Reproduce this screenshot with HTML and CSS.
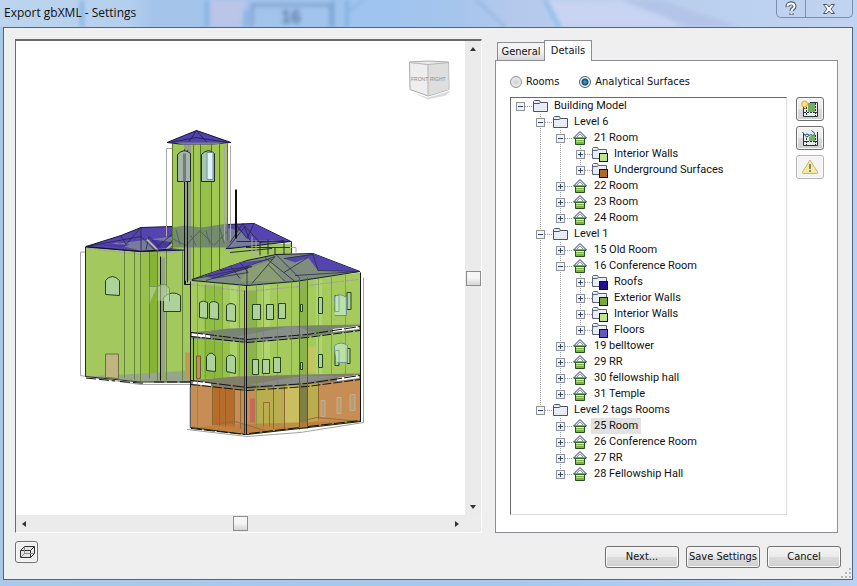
FILE: index.html
```html
<!DOCTYPE html>
<html lang="en">
  <head>
    <meta charset="utf-8">
    <title>Export gbXML - Settings</title>
    <link rel="stylesheet" href="styles.css">
  </head>
  <body>
    <svg class="defs" width="0" height="0" aria-hidden="true">
      <symbol id="folder" viewBox="0 0 16 16">
        <path d="M1.500 13.500V3.500L2.500 2.500H7.500L8.500 4.500H15.500V13.500Z" fill="#e9ecf4" stroke="#4d5261"/>
        <path d="M2 5.500H7L8.500 4.500" fill="none" stroke="#4d5261"/>
      </symbol>
      <symbol id="surface" viewBox="0 0 16 16">
        <path d="M.5 12.500V2.500L1.500 1.500H5.500L6.500 3.500H14.500V12.500Z" fill="#e9ecf4" stroke="#5b6273"/>
        <path d="M1 4.500H5L6.500 3.500" fill="none" stroke="#5b6273"/>
        <rect x="7.500" y="7.500" width="8" height="8" fill="currentColor" stroke="#111"/>
      </symbol>
      <symbol id="house" viewBox="0 0 16 16">
        <path d="M3.500 8H12.500V14.500H3.500Z" fill="#7db54a" stroke="#26511f"/>
        <path d="M4 9.500H12" stroke="#e8f5d5"/>
        <path d="M4 11.500H12" stroke="#b4da85"/>
        <path d="M8 1.500L1.500 8H14.500Z" fill="#dfe6ef" stroke="#2f4057"/>
        <path d="M8 4L4.500 7.500H11.500Z" fill="#fff" stroke="#8895a8"/>
        <path d="M2 8.500H14" stroke="#2c6a22"/>
      </symbol>
    </svg>

    <header class="titlebar">
      <svg class="glass" viewBox="0 0 857 27" preserveAspectRatio="xMinYMin slice" aria-hidden="true">
        <defs>
          <linearGradient id="sky">
            <stop offset="0" stop-color="#bdd5ee"/>
            <stop offset=".15" stop-color="#b4cfed"/>
            <stop offset=".18" stop-color="#a5c4ea"/>
            <stop offset=".45" stop-color="#9fc4ef"/>
            <stop offset=".53" stop-color="#a5c5ec"/>
            <stop offset=".6" stop-color="#b4c9ec"/>
            <stop offset="1" stop-color="#c0d4f1"/>
          </linearGradient>
          <filter id="soft" x="-10%" y="-50%" width="120%" height="200%"><feGaussianBlur stdDeviation="2"/></filter>
        </defs>
        <rect width="857" height="27" fill="url(#sky)"/>
        <g filter="url(#soft)">
          <path d="M82 0V27M207 0V27M246 10V27M333 0V27M347 0V27" stroke="#79abdd" stroke-width="3"/>
          <path d="M210 0H246L240 27H210Z" fill="#bac5e8"/>
          <path d="M252 27V5H331V27" fill="none" stroke="#7f9fcb" stroke-width="3"/>
          <path d="M348 12L364 0M476 0L505 27" stroke="#8fb0dc" stroke-width="2"/>
          <path d="M546 0L562 27H680L640 0Z" fill="#c8d4f1"/>
          <path d="M545 0L560 27" stroke="#7db6ea" stroke-width="3"/>
          <path d="M620 0L690 27H740L660 0Z" fill="#b4c4e8"/>
          <text class="ghost" x="281" y="23">16</text>
        </g>
      </svg>
      <h1>Export gbXML - Settings</h1>
      <div class="caption">
        <button type="button" aria-label="Help">
          <svg width="14" height="16" viewBox="0 0 14 16"><path d="M3.500 6C3 1 11 1 10.500 5.500C10.300 8 7.500 7.500 7.500 10M7.500 12V14" fill="none" stroke="#4b5568" stroke-width="4"/><path d="M3.500 5.500C3.500 1.500 10.500 1.500 10.500 5.500C10.300 8 7.500 7.500 7.500 10M7.500 12V13.500" fill="none" stroke="#fff" stroke-width="2"/></svg>
        </button>
        <button type="button" class="close" aria-label="Close">
          <svg width="14" height="12" viewBox="0 0 14 12"><path d="M1.500 1.500H5L7 4L9 1.500H12.500L9 6L12.500 10.500H9L7 8L5 10.500H1.500L5 6Z" fill="#fff" stroke="#4b5568"/></svg>
        </button>
      </div>
    </header>

    <main class="client">
      <div class="content">
        <section class="viewport" aria-label="Model preview">
          <svg class="stage" viewBox="16 41 449 473" role="img" aria-label="Analytical model">
            <!-- view cube -->
            <g class="cube">
              <path d="M412 92L428 97L451 90L446 95L428 99Z" fill="#dcdcdc"/>
              <path d="M409.500 61.500L428 60.500L448.500 61.500L449 89L428 95.500L410 89Z" fill="#eee" stroke="#aaa"/>
              <path d="M428 64L448.500 62V89L428 95Z" fill="#dedede"/>
              <path d="M409.500 62L428 64L448.500 62M428 64V95" fill="none" stroke="#b4b4b4"/>
              <text x="411" y="80">FRONT</text>
              <text x="430" y="80">RIGHT</text>
            </g>

            <!-- rear wing -->
            <path d="M80.500 375V251.500H172M80 375L140 384H190" fill="none" stroke="#aaa6ae"/>
            <path d="M85.500 246.500L140 252L172 247L291 243V290H190V381H140L85.500 376Z" fill="#a2c85e"/>
            <path d="M140 252L157 250V381H140Z" fill="#98c04c"/>
            <path d="M149 250H157V374H149Z" fill="#84b336"/>
            <path d="M85.500 376L125 374L190 370V381H140Z" fill="#96a58b"/>
            <path d="M88 248L140 254L180 251" fill="none" stroke="#a99fae" stroke-dasharray="4 1"/>
            <path d="M85.500 246V376L140 381.500H190" fill="none" stroke="#253116"/>
            <path d="M124.500 250V377M134.500 251V379M140.500 251V381M149.500 251V378M157.500 250V380M166.500 250V380M182.500 250V380" stroke="#63843a"/>
            <path d="M160.500 256V380M185.500 150V284" stroke="#111"/>
            <rect x="161" y="257" width="4" height="123" fill="#93a67a"/>
            <path d="M86 377.500L115 380.500M120 381L146 383M154 381.500H190" stroke="#111" stroke-dasharray="10 3"/>

            <path d="M86 246L121 235L141 227L172 226L254 223L291 241L230 248L172 250L140 251Z" fill="#5544b0" stroke="#15134a"/>
            <path d="M112 243L141 237L172 236L230 228L284 241L231 247L140 250Z" fill="#767c9a"/>
            <path d="M236 226L254 223L288 240L250 240ZM121 236L141 228L172 227V236L118 243Z" fill="#5544b0"/>
            <path d="M145 238L190 244L154 249ZM96 244L130 244L122 247Z" fill="#4937a5"/>
            <path d="M86 246L141 236L154 249L172 234L190 250L210 230L228 247L245 226L260 242L284 240M121 235L126 244L141 227V250M146 249L149 236L160 247M165 249L172 240L178 249M236 224L247 238L254 223M230 242L243 223L250 240" fill="none" stroke="#27253f" stroke-opacity=".8"/>
            <path d="M147 239L158 250M166 249L180 237M193 249L206 235M213 248L222 236" stroke="#adb5ad" stroke-width="2"/>
            <path d="M86 246.500L140 251L190 247" fill="none" stroke="#111"/>
            <path d="M230 250L291 243V268H230Z" fill="#a2c85e"/>
            <path d="M236.500 241H291.500V253M230 252L272 248M275 247V254M284 241V254M260 241V255M268 239V254M246 247H290" fill="none" stroke="#283022"/>
            <path d="M291 247H296V252M252 236V260M256 240V258" fill="none" stroke="#aaa"/>

            <!-- bell tower -->
            <path d="M172.500 143H227.500V244L212 280H185V249L172.500 248Z" fill="#a1c855"/>
            <path d="M201 145H212V280H201Z" fill="#8fba42" opacity=".6"/>
            <path d="M184 143H191V280H184Z" fill="#92a084"/>
            <path d="M172 227L185 225L201 227L228 223V247H172Z" fill="#6e8075" opacity=".85"/>
            <path d="M172 238L186 245L200 230L214 245L228 230M176 229L180 244M191 235L196 245M206 230L210 244M220 228L224 243" fill="none" stroke="#46584d" stroke-opacity=".7"/>
            <path d="M166.500 148V236M166.500 148H172M230.500 145V240M224.500 145V240" fill="none" stroke="#aaa6ae"/>
            <path d="M172.500 143V248M193.500 143V278M200.500 143V278M211.500 143V278M219.500 143V278M227.500 143V240" stroke="#547428"/>
            <path d="M184.500 149V284H190M187.500 150V282" fill="none" stroke="#111"/>
            <path d="M177.500 181V154Q184 147 190.500 153V181Z" fill="#a5b6a7" stroke="#1e2e27"/>
            <path d="M183 153H186V181H183Z" fill="#6f7b88"/>
            <path d="M201.500 181V154Q208 147 214.500 153V181Z" fill="#a9c7ae" stroke="#1e2e27"/>
            <path d="M207 152H213V179H207Z" fill="#def5f5" stroke="#7387a4"/>
            <path d="M167 142L196.500 130L231 142L212 143.500H180Z" fill="#5243b0" stroke="#16123a"/>
            <path d="M196.500 130L189 141M196.500 130L207 142M170 142L196 137L228 142" fill="none" stroke="#282450"/>
            <path d="M175 142H224L216 144H183Z" fill="#79808a"/>
            <path d="M236 189V238" stroke="#111" stroke-width="2"/>

            <path class="pane" d="M105.500 294V280Q112 272 119.500 280V295Z"/>
            <path class="pane" d="M163.500 311V297Q172 289 180.500 295V311Z"/>
            <path d="M149.500 303V286H157M157.500 300V286Q165 281 169.500 288V301" fill="#bcd7ad" fill-opacity=".6" stroke="#789557"/>
            <path d="M105.500 377V353.500H118.500V378Z" fill="#c0b580" stroke="#6c7043"/>
            <path d="M185 352H190V378H185Z" fill="#bd9b53"/>

            <!-- front wing -->
            <path d="M190.500 281L247 285L361 272V421L247 434L190.500 427Z" fill="#a4cb5c"/>
            <path d="M191 338L247 343V386L191 379Z" fill="#98c148"/>
            <path d="M204 284L223 286V330L204 329ZM204 339L223 342V378L204 377Z" fill="#86b636" opacity=".65"/>
            <path d="M230 285H237V382H230ZM262 284H270V380H262ZM316 279H322V374H316Z" fill="#b4d779" opacity=".7"/>
            <path d="M247 290H256V385H247ZM299 278H307V376H299Z" fill="#719a3a" opacity=".45"/>
            <path d="M191 284L247 291L299 286L358 279" fill="none" stroke="#a89bad" stroke-dasharray="4 1"/>

            <path d="M191 382L247 389L361 376V420L247 433L191 427Z" fill="#c68d55"/>
            <path d="M212 385L235 388V427L212 424Z" fill="#b66c2b"/>
            <path d="M256 388L318 381V420L265 430L256 426Z" fill="#b9ad50"/>
            <path d="M284 385H299V427H284Z" fill="#c9bf60"/>
            <path d="M299 384H307V428H299Z" fill="#7f8043"/>
            <path d="M193 427L228 424L361 420L247 433Z" fill="#bd7b3a" opacity=".7"/>
            <path d="M212.500 384V425M219.500 385V426M225.500 386V426M234.500 387V424M240.500 388V428M318.500 382V419M284.500 386V428M273.500 386V428" stroke="#8d6731"/>
            <path d="M250 398H255V422H250Z" fill="#c46a56"/>
            <path d="M263.500 426V402H269.500V426M212 424L235 421L265 430M299 421L317 417L361 421" fill="none" stroke="#9b6b36"/>
            <path d="M321 400H325V416H321ZM337 397H341V413H337ZM350 394H355V410H350Z" fill="#b89c72" stroke="#c9ad87"/>

            <path d="M191 332L230 328L307 325L360 324V330L300 337L247 342L191 338Z" fill="#788573"/>
            <path d="M191 380L235 376L307 374L360 373V379L247 389L191 384Z" fill="#83806a"/>
            <path d="M232 337L295 325L315 333L267 341ZM250 384L305 375L340 376L280 386Z" fill="#8c9394" opacity=".7"/>
            <path d="M192 334L210 336M333 330L359 327M193 382L211 384M337 379L359 376" stroke="#fff" stroke-width="3"/>
            <path d="M191 332L247 339L307 334L360 326M191 380L247 387L307 383L360 375" fill="none" stroke="#111" stroke-dasharray="12 2"/>
            <path d="M191 336L247 342L307 337L360 330M191 384L247 390L307 386L360 379" fill="none" stroke="#111" stroke-dasharray="9 2"/>

            <path d="M192 279L247 260L276 254L313 253L360 271L295 281L247 285L192 280Z" fill="#7f8c80" stroke="#15202b"/>
            <path d="M284 258L313 253L359 271L318 270L308 257L295 262ZM204 275L240 262L275 258L252 267L235 272L212 278Z" fill="#5544b0"/>
            <path d="M250 264L270 259L285 281H240Z" fill="#8fa46e" opacity=".7"/>
            <path d="M192 279L235 270L275 256L252 283M240 262L248 272L212 278M265 257L295 281M268 264L285 281M276 254L300 278M284 258L313 254L318 270L359 271L295 275M308 257L284 272M247 266V285M220 270L252 266L206 280M230 265L240 278" fill="none" stroke="#24303e" stroke-opacity=".8"/>

            <path d="M197.500 282V427M205.500 284V380M214.500 283V381M222.500 284V381M239.500 284V384M256.500 284V427M263.500 283V385M277.500 282V384M291.500 281V380M318.500 278V376M331.500 276V374M345.500 274V374" stroke="#6c9338" opacity=".65"/>
            <path d="M299.500 278V429M307.500 277V428" stroke="#4e6430"/>
            <path d="M190.500 281V427L247 434L361 421M193.500 337V381" fill="none" stroke="#1a2112"/>
            <path d="M246.500 285V434M360.500 272V421" stroke="#111"/>
            <path d="M244.500 290V433" stroke="#333"/>
            <path d="M363.500 277V422L300 432L247 436L187 429M190 387V427" fill="none" stroke="#a29ea5"/>
            <path d="M191 428L245 434M249 433L300 427M308 426L361 420" stroke="#111" stroke-dasharray="11 2"/>

            <path class="pane" d="M199.500 317V302Q203 299 207.500 302V318ZM209.500 318V303Q213 299 218.500 303V319ZM226.500 320V305Q231 301 235.500 305V321Z"/>
            <path class="pane" d="M252.500 304H260.500V319H252.500ZM266.500 304H273.500V319H266.500ZM278.500 303H285.500V318H278.500Z"/>
            <path class="pane" d="M318.500 297H322.500V313H318.500ZM335 295H339V311H335ZM347 292H351V309H347ZM300.500 304H302.500V311H300.500Z"/>
            <path class="pane" d="M206.500 370V356Q211 349 215.500 356V371ZM226.500 371V357Q231 352 235.500 357V373Z"/>
            <path class="pane" d="M252.500 359H258.500V374H252.500ZM262.500 359H269.500V373H262.500ZM273.500 357H280.500V372H273.500Z"/>
            <path class="pane" d="M318.500 354H322.500V367H318.500ZM335 350H339V365H335ZM347 348H350V363H347ZM300.500 362H302.500V369H300.500Z"/>
            <path d="M334.500 350V345Q341 340 347.500 345V362H337M334.500 301V296Q340 292 346.500 297V315H335" fill="#ccefdc" fill-opacity=".6" stroke="#6d8e9b"/>
            <path d="M308 346H316V372H308Z" fill="#c3c55e"/>
            <path d="M196.500 355.500H200.500V378H196.500Z" fill="#b99551" stroke="#695c31"/>
          </svg>
          <div class="scroll vertical">
            <button type="button" class="arrow up" aria-label="Scroll up"></button>
            <div class="thumb"></div>
            <button type="button" class="arrow down" aria-label="Scroll down"></button>
          </div>
          <div class="scroll horizontal">
            <button type="button" class="arrow left" aria-label="Scroll left"></button>
            <div class="thumb"></div>
            <button type="button" class="arrow right" aria-label="Scroll right"></button>
          </div>
        </section>

        <section class="tabs">
          <div class="tablist" role="tablist">
            <button type="button" class="tab" role="tab" aria-selected="false">General</button>
            <button type="button" class="tab active" role="tab" aria-selected="true">Details</button>
          </div>
          <div class="panel" role="tabpanel">
            <div class="modes">
              <label><input type="radio" name="mode">Rooms</label>
              <label><input type="radio" name="mode" checked>Analytical Surfaces</label>
            </div>
            <div class="details">
              <ul class="tree">
                <li>
                  <div class="row"><button type="button" class="toggle open" aria-label="Collapse"></button><svg><use href="#folder"/></svg><span>Building Model</span></div>
                  <ul>
                    <li>
                      <div class="row"><button type="button" class="toggle open" aria-label="Collapse"></button><svg><use href="#folder"/></svg><span>Level 6</span></div>
                      <ul>
                        <li>
                          <div class="row"><button type="button" class="toggle open" aria-label="Collapse"></button><svg><use href="#house"/></svg><span>21 Room</span></div>
                          <ul>
                            <li><div class="row"><button type="button" class="toggle" aria-label="Expand"></button><svg class="interior"><use href="#surface"/></svg><span>Interior Walls</span></div></li>
                            <li><div class="row"><button type="button" class="toggle" aria-label="Expand"></button><svg class="underground"><use href="#surface"/></svg><span>Underground Surfaces</span></div></li>
                          </ul>
                        </li>
                        <li><div class="row"><button type="button" class="toggle" aria-label="Expand"></button><svg><use href="#house"/></svg><span>22 Room</span></div></li>
                        <li><div class="row"><button type="button" class="toggle" aria-label="Expand"></button><svg><use href="#house"/></svg><span>23 Room</span></div></li>
                        <li><div class="row"><button type="button" class="toggle" aria-label="Expand"></button><svg><use href="#house"/></svg><span>24 Room</span></div></li>
                      </ul>
                    </li>
                    <li>
                      <div class="row"><button type="button" class="toggle open" aria-label="Collapse"></button><svg><use href="#folder"/></svg><span>Level 1</span></div>
                      <ul>
                        <li><div class="row"><button type="button" class="toggle" aria-label="Expand"></button><svg><use href="#house"/></svg><span>15 Old Room</span></div></li>
                        <li>
                          <div class="row"><button type="button" class="toggle open" aria-label="Collapse"></button><svg><use href="#house"/></svg><span>16 Conference Room</span></div>
                          <ul>
                            <li><div class="row"><button type="button" class="toggle" aria-label="Expand"></button><svg class="roofs"><use href="#surface"/></svg><span>Roofs</span></div></li>
                            <li><div class="row"><button type="button" class="toggle" aria-label="Expand"></button><svg class="exterior"><use href="#surface"/></svg><span>Exterior Walls</span></div></li>
                            <li><div class="row"><button type="button" class="toggle" aria-label="Expand"></button><svg class="interior"><use href="#surface"/></svg><span>Interior Walls</span></div></li>
                            <li><div class="row"><button type="button" class="toggle" aria-label="Expand"></button><svg class="floors"><use href="#surface"/></svg><span>Floors</span></div></li>
                          </ul>
                        </li>
                        <li><div class="row"><button type="button" class="toggle" aria-label="Expand"></button><svg><use href="#house"/></svg><span>19 belltower</span></div></li>
                        <li><div class="row"><button type="button" class="toggle" aria-label="Expand"></button><svg><use href="#house"/></svg><span>29 RR</span></div></li>
                        <li><div class="row"><button type="button" class="toggle" aria-label="Expand"></button><svg><use href="#house"/></svg><span>30 fellowship hall</span></div></li>
                        <li><div class="row"><button type="button" class="toggle" aria-label="Expand"></button><svg><use href="#house"/></svg><span>31 Temple</span></div></li>
                      </ul>
                    </li>
                    <li>
                      <div class="row"><button type="button" class="toggle open" aria-label="Collapse"></button><svg><use href="#folder"/></svg><span>Level 2 tags Rooms</span></div>
                      <ul>
                        <li><div class="row selected"><button type="button" class="toggle" aria-label="Expand"></button><svg><use href="#house"/></svg><span>25 Room</span></div></li>
                        <li><div class="row"><button type="button" class="toggle" aria-label="Expand"></button><svg><use href="#house"/></svg><span>26 Conference Room</span></div></li>
                        <li><div class="row"><button type="button" class="toggle" aria-label="Expand"></button><svg><use href="#house"/></svg><span>27 RR</span></div></li>
                        <li><div class="row"><button type="button" class="toggle" aria-label="Expand"></button><svg><use href="#house"/></svg><span>28 Fellowship Hall</span></div></li>
                      </ul>
                    </li>
                  </ul>
                </li>
              </ul>
              <div class="tools">
                <button type="button" class="btn" aria-label="Highlight">
                  <svg width="18" height="18" viewBox="0 0 18 18"><path d="M3 7H16V16H3Z" fill="#e7ebe9"/><path d="M7 3H14V12H7Z" fill="#72ad61"/><path d="M2.500 7V16.500H16.500V2.500H9" fill="none" stroke="#26353c"/><path d="M5.500 7V16M3 12.500H16M14.500 3V16" stroke="#26353c" stroke-dasharray="2 1"/><circle cx="3.500" cy="4" r="3" fill="#ffe38a" stroke="#e6a91e"/><path d="M2.500 8.500H4.500" stroke="#7a6430"/></svg>
                </button>
                <button type="button" class="btn" aria-label="Isolate">
                  <svg width="18" height="18" viewBox="0 0 18 18"><path d="M2.500 4V16.500H16.500V3" fill="#e7ebe9" stroke="#26353c"/><path d="M8 8L14 5V12H8Z" fill="#72ad61"/><path d="M5.500 9V16M3 12.500H16M14.500 6V16" stroke="#26353c" stroke-dasharray="2 1"/><path d="M1.500 3L4 6.500Q6 9.500 8 6.500L10 5.500Q13 8 13.500 4L10.500 1.500M4 6Q6 4 8 6" fill="#dcecf6" stroke="#25505f"/></svg>
                </button>
                <button type="button" class="btn" aria-label="Show related warnings" disabled>
                  <svg width="18" height="18" viewBox="0 0 18 18"><path d="M9 2L16.500 14Q17 15.500 15.500 15.500H2.500Q1 15.500 1.500 14Z" fill="#f3eaa2" stroke="#c3b878"/><path d="M9 6V11M9 12V14" stroke="#8d8863" stroke-width="2"/></svg>
                </button>
              </div>
            </div>
          </div>
        </section>
      </div>

      <footer class="actions">
        <button type="button" class="btn style" aria-label="Visual style">
          <svg width="16" height="14" viewBox="0 0 16 14"><path d="M1.500 5.500H11.500V12.500H1.500ZM1.500 5.500L5.500 1.500H15.500L11.500 5.500M15.500 1.500V8.500L11.500 12.500" fill="#e3e3e3" stroke="#333"/><path d="M5.500 2V8.500H15M5.500 8.500L2 12" fill="none" stroke="#888"/></svg>
        </button>
        <button type="button" class="btn">Next...</button>
        <button type="button" class="btn">Save Settings</button>
        <button type="button" class="btn">Cancel</button>
      </footer>
      <svg class="grip" width="10" height="10" viewBox="0 0 10 10" aria-hidden="true"><path d="M8 0h2v2h-2zM4 4h2v2h-2zM8 4h2v2h-2zM0 8h2v2h-2zM4 8h2v2h-2zM8 8h2v2h-2z" fill="#b8b8b8"/></svg>
    </main>
  </body>
</html>
```
FILE: styles.css
```css
* {
    box-sizing: border-box;
}
body {
    display: flex;
    flex-direction: column;
    min-height: 100vh;
    margin: 0;
    padding: 0 4px 6px 3px;
    background: linear-gradient(90deg, #a9c9ea, #a6c8ef 60%, #b9d1f2);
    color: #111;
    font: 11px/14px "DejaVu Sans Condensed", Tahoma, "DejaVu Sans", sans-serif;
}
button {
    padding: 0;
    color: inherit;
    font: inherit;
}
ul {
    margin: 0;
    padding: 0;
    list-style: none;
}
.defs {
    position: absolute;
}

/* title bar */
.titlebar {
    display: flex;
    justify-content: space-between;
    height: 27px;
}
.titlebar h1 {
    z-index: 1;
    margin: 0 0 0 1px;
    font: 12px/26px "Open Sans", "Segoe UI", sans-serif;
}
.glass {
    position: absolute;
    top: 0;
    left: 0;
    width: 100%;
    height: 27px;
}
.ghost {
    fill: #5f7aa6;
    font: bold 18px "Liberation Sans", sans-serif;
}
.caption {
    z-index: 1;
    display: flex;
    height: 18px;
    border: 1px solid #7b8db0;
    border-top: 0;
    border-radius: 0 0 5px 5px;
}
.caption button {
    display: flex;
    align-items: center;
    justify-content: center;
    width: 28px;
    border: 0;
    background: none;
}
.caption .close {
    width: 47px;
    border-left: 1px solid #7b8db0;
}

/* dialog body */
.client {
    position: relative;
    display: flex;
    flex: 1;
    flex-direction: column;
    gap: 8px;
    padding: 11px;
    border: 1px solid #4f6585;
    background: #efefef;
}
.content {
    display: flex;
    flex: 1;
    gap: 13px;
    padding-right: 3px;
}
.viewport {
    display: grid;
    flex: 1;
    grid-template-columns: 1fr 16px;
    grid-template-rows: 1fr 17px;
    min-width: 0;
    border: 1px solid #fff;
    border-top: 2px solid #6a6a6a;
    border-left: 1px solid #6a6a6a;
    background: #ececec;
}
.stage {
    width: 100%;
    height: 100%;
    background: #fff;
}
.stage .pane {
    fill: #afd29a;
    stroke: #25431f;
}
.cube text {
    fill: #8b8b8b;
    font: 5px "Liberation Sans Narrow", "Liberation Sans", sans-serif;
}
.scroll {
    display: flex;
    align-items: center;
    justify-content: space-between;
    background: #ebebeb;
}
.vertical {
    flex-direction: column;
}
.thumb {
    width: 15px;
    height: 15px;
    border: 1px solid #8d8d8d;
    background: linear-gradient(#f6f6f6 45%, #d6d6d6);
}
.arrow {
    display: flex;
    align-items: center;
    justify-content: center;
    width: 16px;
    height: 16px;
    border: 0;
    background: none;
}
.arrow:before {
    border: 3px solid transparent;
    content: "";
}
.up:before {
    border-top: 0;
    border-bottom: 4px solid #333;
}
.down:before {
    border-top: 4px solid #333;
    border-bottom: 0;
}
.left:before {
    border-right: 4px solid #333;
    border-left: 0;
}
.right:before {
    border-right: 0;
    border-left: 4px solid #333;
}

/* tabs */
.tabs {
    display: flex;
    flex-direction: column;
    width: 343px;
}
.tablist {
    display: flex;
    align-items: flex-end;
    height: 21px;
    padding-left: 2px;
}
.tab {
    height: 18px;
    width: 47px;
    border: 1px solid #8c8e94;
    border-width: 1px 0 0 1px;
    background: linear-gradient(#f3f3f3 45%, #d8d8d8);
}
.tab.active {
    z-index: 1;
    width: 48px;
    height: 21px;
    margin-bottom: -1px;
    border-width: 1px 1px 0;
    background: #fff;
}
.panel {
    display: flex;
    flex: 1;
    flex-direction: column;
    gap: 8px;
    padding: 14px 13px 17px 14px;
    border: 1px solid #8c8e94;
    background: #fff;
}
.modes {
    display: flex;
    gap: 20px;
}
.modes label {
    display: flex;
    align-items: center;
    gap: 4px;
    height: 14px;
}
.modes input {
    width: 12px;
    height: 12px;
    margin: 0;
    border: 1px solid #8e8f8f;
    border-radius: 50%;
    background: radial-gradient(#d2d2d2, #f6f6f6);
    appearance: none;
}
.modes input:checked {
    border-color: #50616d;
    background: radial-gradient(#4fb0dc, #12476c 3px, #e9f2f7 4px);
}
.details {
    display: flex;
    flex: 1;
    gap: 9px;
}

/* surface tree */
.tree {
    flex: 1;
    padding-left: 5px;
    border: 1px solid #ddd;
    border-top-color: #6a6a6a;
    border-left-color: #6a6a6a;
    font-family: Roboto, "Liberation Sans", sans-serif;
}
.tree ul {
    padding-left: 20px;
}
.tree ul > li {
    background: repeating-linear-gradient(#999 0 1px, transparent 1px 2px) 4px 0 / 1px 100% no-repeat;
}
.tree ul > li:last-child {
    background-size: 1px 8px;
}
.row {
    display: flex;
    align-items: center;
    height: 16px;
}
.row svg {
    width: 16px;
    height: 16px;
    margin-left: 7px;
}
.row span {
    margin-left: 3px;
    padding: 0 3px;
    line-height: 16px;
}
.row:before {
    order: 1;
    width: 7px;
    height: 1px;
    margin-right: -7px;
    background: repeating-linear-gradient(90deg, #999 0 1px, transparent 1px 2px);
    content: "";
}
.row svg, .row span {
    order: 2;
}
.selected span {
    background: #e2e2e2;
}
.toggle {
    width: 9px;
    height: 9px;
    border: 1px solid #8f9299;
    background:
        linear-gradient(#33466f, #33466f) center / 5px 1px no-repeat,
        linear-gradient(#33466f, #33466f) center / 1px 5px no-repeat,
        #f4f4f4;
}
.toggle.open {
    background: linear-gradient(#33466f, #33466f) center / 5px 1px no-repeat, #f4f4f4;
}
.interior {
    color: #bfe38a;
}
.underground {
    color: #b0692b;
}
.roofs {
    color: #23118f;
}
.exterior {
    color: #7ca836;
}
.floors {
    color: #6457bd;
}

/* buttons */
.tools {
    display: flex;
    flex-direction: column;
    gap: 5px;
}
.btn {
    display: flex;
    align-items: center;
    justify-content: center;
    width: 74px;
    height: 22px;
    border: 1px solid #707070;
    border-radius: 3px;
    background: linear-gradient(#f3f3f3, #ebebeb 50%, #dcdcdc 51%, #cfcfcf);
    box-shadow: inset 0 0 0 1px #fafafa;
}
.tools .btn {
    width: 28px;
    height: 24px;
}
.btn:disabled {
    border-color: #b5b5b5;
    background: #f4f4f4;
}
.actions {
    display: flex;
    align-items: flex-end;
    gap: 7px;
    height: 27px;
}
.actions .style {
    align-self: flex-start;
    width: 23px;
    margin-right: auto;
    background: #efefef;
}
.grip {
    position: absolute;
    right: 1px;
    bottom: 1px;
}
```
